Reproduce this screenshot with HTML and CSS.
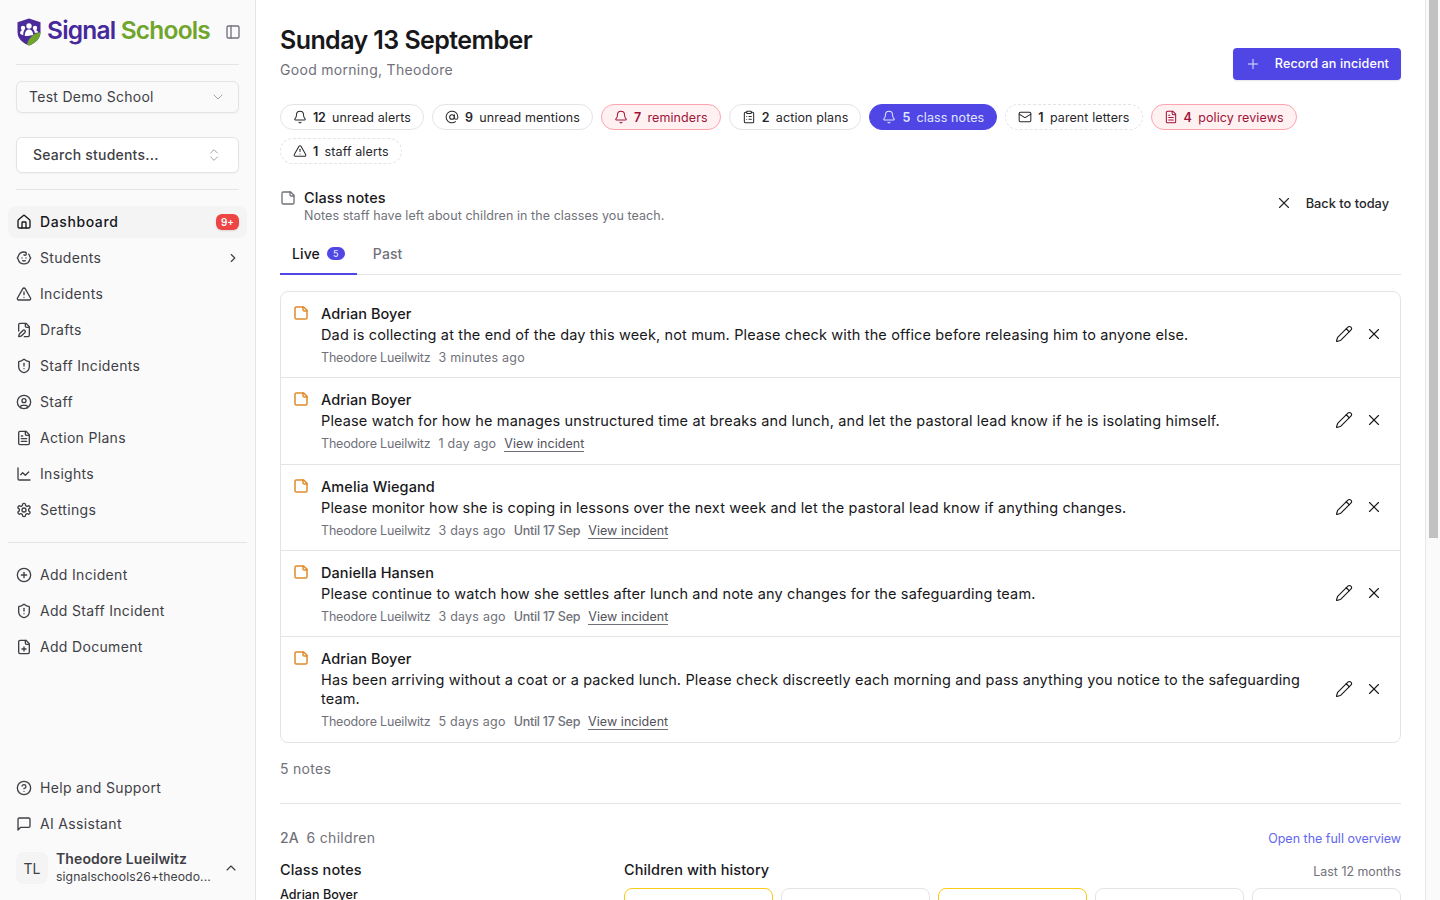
FILE: index.html
```html
<!DOCTYPE html>
<html lang="en">
<head>
<meta charset="utf-8">
<title>Signal Schools</title>
<link rel="stylesheet" href="styles.css">
</head>
<body>
<svg class="defs" width="0" height="0" aria-hidden="true">
  <symbol id="i-house" viewBox="0 0 24 24"><path d="M15 21v-8a1 1 0 0 0-1-1h-4a1 1 0 0 0-1 1v8"/><path d="M3 10a2 2 0 0 1 .709-1.528l7-5.999a2 2 0 0 1 2.582 0l7 5.999A2 2 0 0 1 21 10v9a2 2 0 0 1-2 2H5a2 2 0 0 1-2-2z"/></symbol>
  <symbol id="i-baby" viewBox="0 0 24 24"><path d="M9 12h.01"/><path d="M15 12h.01"/><path d="M10 16c.5.3 1.2.5 2 .5s1.5-.2 2-.5"/><path d="M19 6.3a9 9 0 0 1 1.8 3.9 2 2 0 0 1 0 3.6 9 9 0 0 1-17.6 0 2 2 0 0 1 0-3.6A9 9 0 0 1 12 3c2 0 3.5 1.1 3.5 2.5s-.9 2.5-2 2.5c-.8 0-1.5-.4-1.5-1"/></symbol>
  <symbol id="i-alert" viewBox="0 0 24 24"><path d="m21.73 18-8-14a2 2 0 0 0-3.48 0l-8 14A2 2 0 0 0 4 21h16a2 2 0 0 0 1.73-3"/><path d="M12 9v4"/><path d="M12 17h.01"/></symbol>
  <symbol id="i-filepen" viewBox="0 0 24 24"><path d="M12.5 22H18a2 2 0 0 0 2-2V7l-5-5H6a2 2 0 0 0-2 2v9.5"/><path d="M14 2v4a2 2 0 0 0 2 2h4"/><path d="M13.378 15.626a1 1 0 1 0-3.004-3.004l-5.01 5.012a2 2 0 0 0-.506.854l-.837 2.87a.5.5 0 0 0 .62.62l2.87-.837a2 2 0 0 0 .854-.506z"/></symbol>
  <symbol id="i-shield" viewBox="0 0 24 24"><path d="M20 13c0 5-3.5 7.5-7.66 8.95a1 1 0 0 1-.67-.01C7.5 20.5 4 18 4 13V6a1 1 0 0 1 1-1c2 0 4.5-1.2 6.24-2.72a1.17 1.17 0 0 1 1.52 0C14.51 3.81 17 5 19 5a1 1 0 0 1 1 1z"/><path d="M12 8v4"/><path d="M12 16h.01"/></symbol>
  <symbol id="i-user" viewBox="0 0 24 24"><circle cx="12" cy="12" r="10"/><circle cx="12" cy="10" r="3"/><path d="M7 20.662V19a2 2 0 0 1 2-2h6a2 2 0 0 1 2 2v1.662"/></symbol>
  <symbol id="i-filetext" viewBox="0 0 24 24"><path d="M15 2H6a2 2 0 0 0-2 2v16a2 2 0 0 0 2 2h12a2 2 0 0 0 2-2V7Z"/><path d="M14 2v4a2 2 0 0 0 2 2h4"/><path d="M10 9H8"/><path d="M16 13H8"/><path d="M16 17H8"/></symbol>
  <symbol id="i-chart" viewBox="0 0 24 24"><path d="M3 3v16a2 2 0 0 0 2 2h16"/><path d="m19 9-5 5-4-4-3 3"/></symbol>
  <symbol id="i-settings" viewBox="0 0 24 24"><path d="M12.22 2h-.44a2 2 0 0 0-2 2v.18a2 2 0 0 1-1 1.73l-.43.25a2 2 0 0 1-2 0l-.15-.08a2 2 0 0 0-2.73.73l-.22.38a2 2 0 0 0 .73 2.73l.15.1a2 2 0 0 1 1 1.72v.51a2 2 0 0 1-1 1.74l-.15.09a2 2 0 0 0-.73 2.73l.22.38a2 2 0 0 0 2.73.73l.15-.08a2 2 0 0 1 2 0l.43.25a2 2 0 0 1 1 1.73V20a2 2 0 0 0 2 2h.44a2 2 0 0 0 2-2v-.18a2 2 0 0 1 1-1.73l.43-.25a2 2 0 0 1 2 0l.15.08a2 2 0 0 0 2.73-.73l.22-.39a2 2 0 0 0-.73-2.73l-.15-.08a2 2 0 0 1-1-1.74v-.5a2 2 0 0 1 1-1.74l.15-.09a2 2 0 0 0 .73-2.73l-.22-.38a2 2 0 0 0-2.73-.73l-.15.08a2 2 0 0 1-2 0l-.43-.25a2 2 0 0 1-1-1.73V4a2 2 0 0 0-2-2z"/><circle cx="12" cy="12" r="3"/></symbol>
  <symbol id="i-circleplus" viewBox="0 0 24 24"><circle cx="12" cy="12" r="10"/><path d="M8 12h8"/><path d="M12 8v8"/></symbol>
  <symbol id="i-fileplus" viewBox="0 0 24 24"><path d="M15 2H6a2 2 0 0 0-2 2v16a2 2 0 0 0 2 2h12a2 2 0 0 0 2-2V7Z"/><path d="M14 2v4a2 2 0 0 0 2 2h4"/><path d="M9 15h6"/><path d="M12 18v-6"/></symbol>
  <symbol id="i-help" viewBox="0 0 24 24"><circle cx="12" cy="12" r="10"/><path d="M9.09 9a3 3 0 0 1 5.83 1c0 2-3 3-3 3"/><path d="M12 17h.01"/></symbol>
  <symbol id="i-message" viewBox="0 0 24 24"><path d="M21 15a2 2 0 0 1-2 2H7l-4 4V5a2 2 0 0 1 2-2h14a2 2 0 0 1 2 2z"/></symbol>
  <symbol id="i-sticky" viewBox="0 0 24 24"><path d="M16 3H5a2 2 0 0 0-2 2v14a2 2 0 0 0 2 2h14a2 2 0 0 0 2-2V8Z"/><path d="M15 3v4a2 2 0 0 0 2 2h4"/></symbol>
  <symbol id="i-pencil" viewBox="0 0 24 24"><path d="M21.174 6.812a1 1 0 0 0-3.986-3.987L3.842 16.174a2 2 0 0 0-.5.83l-1.321 4.352a.5.5 0 0 0 .623.622l4.353-1.32a2 2 0 0 0 .83-.497z"/><path d="m15 5 4 4"/></symbol>
  <symbol id="i-x" viewBox="0 0 24 24"><path d="M18 6 6 18"/><path d="m6 6 12 12"/></symbol>
  <symbol id="i-bell" viewBox="0 0 24 24"><path d="M10.268 21a2 2 0 0 0 3.464 0"/><path d="M3.262 15.326A1 1 0 0 0 4 17h16a1 1 0 0 0 .74-1.673C19.41 13.956 18 12.499 18 8A6 6 0 0 0 6 8c0 4.499-1.411 5.956-2.738 7.326"/></symbol>
  <symbol id="i-at" viewBox="0 0 24 24"><circle cx="12" cy="12" r="4"/><path d="M16 8v5a3 3 0 0 0 6 0v-1a10 10 0 1 0-4 8"/></symbol>
  <symbol id="i-clipboard" viewBox="0 0 24 24"><rect x="8" y="2" width="8" height="4" rx="1"/><path d="M16 4h2a2 2 0 0 1 2 2v14a2 2 0 0 1-2 2H6a2 2 0 0 1-2-2V6a2 2 0 0 1 2-2h2"/><path d="M12 11h4"/><path d="M12 16h4"/><path d="M8 11h.01"/><path d="M8 16h.01"/></symbol>
  <symbol id="i-mail" viewBox="0 0 24 24"><path d="m22 7-8.991 5.727a2 2 0 0 1-2.009 0L2 7"/><rect x="2" y="4" width="20" height="16" rx="2"/></symbol>
  <symbol id="i-panel" viewBox="0 0 24 24"><rect x="3" y="3" width="18" height="18" rx="2"/><path d="M9 3v18"/></symbol>
  <symbol id="i-updown" viewBox="0 0 24 24"><path d="m7 15 5 5 5-5"/><path d="m7 9 5-5 5 5"/></symbol>
  <symbol id="i-down" viewBox="0 0 24 24"><path d="m6 9 6 6 6-6"/></symbol>
  <symbol id="i-up" viewBox="0 0 24 24"><path d="m18 15-6-6-6 6"/></symbol>
  <symbol id="i-right" viewBox="0 0 24 24"><path d="m9 18 6-6-6-6"/></symbol>
  <symbol id="i-plus" viewBox="0 0 24 24"><path d="M5 12h14"/><path d="M12 5v14"/></symbol>
</svg>

<div class="app">
  <aside class="sidebar">
    <div class="brand">
      <div class="logo">
        <svg class="shield" viewBox="0 0 24 28" aria-hidden="true">
          <path d="M12 .5 23.5 4.2V14c0 6.6-4.8 11-11.5 13.5C5.3 25 .5 20.6.5 14V4.2z" fill="#4c2a9a"/>
          <path d="M23.5 13.5V14c0 6.6-4.8 11-11.5 13.5-.8-.3-1.300-.5-2-.9 1-6 6-11 13.500-12.600z" fill="#6fa52b"/>
          <circle cx="12" cy="8" r="2.700" fill="#fff"/>
          <circle cx="6" cy="10" r="2.200" fill="#fff"/>
          <circle cx="18" cy="10" r="2.200" fill="#fff"/>
          <path d="M7.800 18c0-4 1.500-6.500 4.200-6.500s4.200 2.500 4.200 5.500c-2.500.5-5 1-8.400 1z" fill="#fff"/>
          <path d="M3 15.500c0-2 1.200-3.600 3-3.600.6 0 1 .1 1.300.3-.8 1.400-1.100 3-1.100 5-1.300-.4-2.500-1-3.200-1.700zM21 14.500c0-1.500-1.200-2.600-3-2.600-.4 0-.8.1-1.200.2.500.8.800 1.800 1 2.800 1.200-.1 2.200-.2 3.200-.4z" fill="#fff"/>
        </svg>
        <span class="logo-text"><span class="logo-signal">Signal</span> <span class="logo-schools">Schools</span></span>
      </div>
      <svg class="ic ic-panel"><use href="#i-panel"/></svg>
    </div>
    <div class="side-pad">
      <hr class="rule">
      <div class="select">
        <span class="lift">Test Demo School</span>
        <svg class="ic ic-chev"><use href="#i-down"/></svg>
      </div>
      <div class="search">
        <span class="lift">Search students...</span>
        <svg class="ic ic-chev"><use href="#i-updown"/></svg>
      </div>
      <hr class="rule rule-search">
    </div>
    <nav class="nav">
      <a class="nav-item active"><svg class="ic"><use href="#i-house"/></svg><span class="nav-label">Dashboard</span><span class="badge">9+</span></a>
      <a class="nav-item"><svg class="ic"><use href="#i-baby"/></svg><span class="nav-label">Students</span><svg class="ic ic-more"><use href="#i-right"/></svg></a>
      <a class="nav-item"><svg class="ic"><use href="#i-alert"/></svg><span class="nav-label">Incidents</span></a>
      <a class="nav-item"><svg class="ic"><use href="#i-filepen"/></svg><span class="nav-label">Drafts</span></a>
      <a class="nav-item"><svg class="ic"><use href="#i-shield"/></svg><span class="nav-label">Staff Incidents</span></a>
      <a class="nav-item"><svg class="ic"><use href="#i-user"/></svg><span class="nav-label">Staff</span></a>
      <a class="nav-item"><svg class="ic"><use href="#i-filetext"/></svg><span class="nav-label">Action Plans</span></a>
      <a class="nav-item"><svg class="ic"><use href="#i-chart"/></svg><span class="nav-label">Insights</span></a>
      <a class="nav-item"><svg class="ic"><use href="#i-settings"/></svg><span class="nav-label">Settings</span></a>
    </nav>
    <hr class="rule rule-nav">
    <nav class="nav">
      <a class="nav-item"><svg class="ic"><use href="#i-circleplus"/></svg><span class="nav-label">Add Incident</span></a>
      <a class="nav-item"><svg class="ic"><use href="#i-shield"/></svg><span class="nav-label">Add Staff Incident</span></a>
      <a class="nav-item"><svg class="ic"><use href="#i-fileplus"/></svg><span class="nav-label">Add Document</span></a>
    </nav>
    <nav class="nav nav-bottom">
      <a class="nav-item"><svg class="ic"><use href="#i-help"/></svg><span class="nav-label">Help and Support</span></a>
      <a class="nav-item"><svg class="ic"><use href="#i-message"/></svg><span class="nav-label">AI Assistant</span></a>
    </nav>
    <div class="account">
      <div class="avatar">TL</div>
      <div class="account-text">
        <div class="account-name">Theodore Lueilwitz</div>
        <div class="account-mail">signalschools26+theodo...</div>
      </div>
      <svg class="ic ic-up"><use href="#i-up"/></svg>
    </div>
  </aside>

  <main class="main">
    <header class="head">
      <div>
        <h1>Sunday 13 September</h1>
        <p class="greeting">Good morning, Theodore</p>
      </div>
      <a class="primary"><svg class="ic"><use href="#i-plus"/></svg><span class="lift">Record an incident</span></a>
    </header>

    <div class="chips">
      <a class="chip"><svg class="ic"><use href="#i-bell"/></svg><b>12</b><span>unread alerts</span></a>
      <a class="chip"><svg class="ic"><use href="#i-at"/></svg><b>9</b><span>unread mentions</span></a>
      <a class="chip chip-pink"><svg class="ic"><use href="#i-bell"/></svg><b>7</b><span>reminders</span></a>
      <a class="chip"><svg class="ic"><use href="#i-clipboard"/></svg><b>2</b><span>action plans</span></a>
      <a class="chip chip-on"><svg class="ic"><use href="#i-bell"/></svg><b>5</b><span>class notes</span></a>
      <a class="chip chip-dash"><svg class="ic"><use href="#i-mail"/></svg><b>1</b><span>parent letters</span></a>
      <a class="chip chip-pink"><svg class="ic"><use href="#i-filetext"/></svg><b>4</b><span>policy reviews</span></a>
      <a class="chip chip-dash"><svg class="ic"><use href="#i-alert"/></svg><b>1</b><span>staff alerts</span></a>
    </div>

    <section class="section-head">
      <svg class="ic ic-section"><use href="#i-sticky"/></svg>
      <div class="section-titles">
        <h2>Class notes</h2>
        <p>Notes staff have left about children in the classes you teach.</p>
      </div>
      <a class="back"><svg class="ic"><use href="#i-x"/></svg><span>Back to today</span></a>
    </section>

    <div class="tabs">
      <a class="tab tab-on">Live <span class="count">5</span></a>
      <a class="tab">Past</a>
    </div>

    <div class="notes">
      <article class="note">
        <svg class="ic ic-note"><use href="#i-sticky"/></svg>
        <div class="note-body">
          <div class="note-name">Adrian Boyer</div>
          <p>Dad is collecting at the end of the day this week, not mum. Please check with the office before releasing him to anyone else.</p>
          <div class="meta"><span>Theodore Lueilwitz</span><span>3 minutes ago</span></div>
        </div>
        <div class="note-actions"><svg class="ic"><use href="#i-pencil"/></svg><svg class="ic"><use href="#i-x"/></svg></div>
      </article>
      <article class="note">
        <svg class="ic ic-note"><use href="#i-sticky"/></svg>
        <div class="note-body">
          <div class="note-name">Adrian Boyer</div>
          <p>Please watch for how he manages unstructured time at breaks and lunch, and let the pastoral lead know if he is isolating himself.</p>
          <div class="meta"><span>Theodore Lueilwitz</span><span>1 day ago</span><a>View incident</a></div>
        </div>
        <div class="note-actions"><svg class="ic"><use href="#i-pencil"/></svg><svg class="ic"><use href="#i-x"/></svg></div>
      </article>
      <article class="note">
        <svg class="ic ic-note"><use href="#i-sticky"/></svg>
        <div class="note-body">
          <div class="note-name">Amelia Wiegand</div>
          <p>Please monitor how she is coping in lessons over the next week and let the pastoral lead know if anything changes.</p>
          <div class="meta"><span>Theodore Lueilwitz</span><span>3 days ago</span><strong>Until 17 Sep</strong><a>View incident</a></div>
        </div>
        <div class="note-actions"><svg class="ic"><use href="#i-pencil"/></svg><svg class="ic"><use href="#i-x"/></svg></div>
      </article>
      <article class="note">
        <svg class="ic ic-note"><use href="#i-sticky"/></svg>
        <div class="note-body">
          <div class="note-name">Daniella Hansen</div>
          <p>Please continue to watch how she settles after lunch and note any changes for the safeguarding team.</p>
          <div class="meta"><span>Theodore Lueilwitz</span><span>3 days ago</span><strong>Until 17 Sep</strong><a>View incident</a></div>
        </div>
        <div class="note-actions"><svg class="ic"><use href="#i-pencil"/></svg><svg class="ic"><use href="#i-x"/></svg></div>
      </article>
      <article class="note">
        <svg class="ic ic-note"><use href="#i-sticky"/></svg>
        <div class="note-body">
          <div class="note-name">Adrian Boyer</div>
          <p>Has been arriving without a coat or a packed lunch. Please check discreetly each morning and pass anything you notice to the safeguarding team.</p>
          <div class="meta"><span>Theodore Lueilwitz</span><span>5 days ago</span><strong>Until 17 Sep</strong><a>View incident</a></div>
        </div>
        <div class="note-actions"><svg class="ic"><use href="#i-pencil"/></svg><svg class="ic"><use href="#i-x"/></svg></div>
      </article>
    </div>

    <p class="notes-count">5 notes</p>
    <hr class="rule rule-main">

    <div class="class-head">
      <div class="class-title"><b>2A</b><span>6 children</span></div>
      <a class="overview">Open the full overview</a>
    </div>

    <div class="class-grid">
      <div>
        <h3>Class notes</h3>
        <div class="class-child">Adrian Boyer</div>
      </div>
      <div>
        <div class="history-head"><h3>Children with history</h3><span>Last 12 months</span></div>
        <div class="history">
          <div class="h-card h-card-warn"></div>
          <div class="h-card"></div>
          <div class="h-card h-card-warn"></div>
          <div class="h-card"></div>
          <div class="h-card"></div>
        </div>
      </div>
    </div>
  </main>

  <div class="scrollbar"><div class="thumb"></div></div>
</div>
</body>
</html>
```
FILE: styles.css
```css
* { box-sizing: border-box; }
html, body { margin: 0; height: 100%; overflow: hidden; }
body {
  font-family: Inter, "Noto Sans", sans-serif;
  font-size: 14px;
  color: #18181b;
  background: #fff;
}
.defs { position: absolute; }
h1, h2, h3, p { margin: 0; }
hr { border: 0; margin: 0; }
.ic {
  width: 16px;
  height: 16px;
  flex: none;
  fill: none;
  stroke: currentColor;
  stroke-width: 2;
  stroke-linecap: round;
  stroke-linejoin: round;
}
.app { display: flex; height: 900px; overflow: hidden; }

/* Sidebar */
.sidebar {
  width: 256px;
  flex: none;
  height: 900px;
  display: flex;
  flex-direction: column;
  padding: 0 8px;
  background: #fafafa;
  border-right: 1px solid #e5e5e5;
  color: #3f3f46;
}
.brand {
  height: 64px;
  display: flex;
  align-items: center;
  justify-content: space-between;
  padding: 0 6px 1px 9px;
}
.logo { display: flex; align-items: center; gap: 6px; }
.shield { width: 24px; height: 28px; flex: none; }
.logo-text { font-size: 24.5px; font-weight: 600; letter-spacing: -.8px; white-space: nowrap; padding-bottom: 3px; }
.logo-signal { color: #46299b; }
.logo-schools { color: #6fa52b; }
.ic-panel { color: #71717a; }
.side-pad { padding: 0 8px; }
.rule { height: 1px; background: #e4e4e7; }
.select, .search {
  display: flex;
  align-items: center;
  justify-content: space-between;
  border: 1px solid #e4e4e7;
  border-radius: 6px;
  letter-spacing: .28px;
  box-shadow: 0 1px 2px rgba(0, 0, 0, .04);
}
.lift { padding-bottom: 2px; }
.select { height: 32px; margin-top: 16px; padding: 0 12px; background: #fafafa; color: #3f3f46; }
.search { height: 36px; margin-top: 24px; padding: 0 16px 0 16px; background: #fff; font-weight: 500; color: #3f3f46; letter-spacing: .22px; }
.ic-chev { color: #a1a1aa; stroke-width: 1.5; }
.rule-search { margin-top: 16px; }
.nav { display: flex; flex-direction: column; gap: 4px; margin-top: 16px; }
.nav-item {
  height: 32px;
  display: flex;
  align-items: center;
  gap: 8px;
  padding: 0 8px;
  border-radius: 8px;
  letter-spacing: .32px;
  white-space: nowrap;
}
.nav-label { flex: 1; padding-bottom: 2px; }
.nav-item.active { background: #f4f4f5; color: #18181b; font-weight: 500; letter-spacing: .6px; }
.badge {
  height: 16px;
  width: 23px;
  text-align: center;
  border-radius: 6px;
  background: #ef4444;
  color: #fff;
  font-size: 10px;
  font-weight: 600;
  line-height: 16px;
  letter-spacing: 0;
  box-shadow: 0 1px 2px rgba(0, 0, 0, .12);
}
.ic-more { width: 14px; height: 14px; margin-right: -1px; }
.rule-nav { margin-top: 16px; }
.nav-bottom { margin-top: auto; }
.account {
  display: flex;
  align-items: center;
  gap: 8px;
  height: 32px;
  margin: 12px 0 16px;
  padding: 0 8px;
}
.avatar {
  width: 32px;
  height: 32px;
  flex: none;
  display: grid;
  place-items: center;
  border-radius: 8px;
  background: #f4f4f5;
  font-size: 14px;
}
.account-text { flex: 1; min-width: 0; line-height: 18px; }
.account-name { font-weight: 600; letter-spacing: .1px; white-space: nowrap; }
.account-mail { font-size: 12.2px; letter-spacing: .1px; white-space: nowrap; }
.ic-up { stroke-width: 1.75; }

/* Main */
.main { flex: 1; min-width: 0; padding: 24px 24px 0; overflow: hidden; }
.head { display: flex; align-items: flex-end; justify-content: space-between; }
h1 { font-size: 25px; font-weight: 600; line-height: 32px; letter-spacing: -.58px; color: #18181b; }
.greeting { margin-top: 3px; line-height: 21px; color: #71717a; font-size: 14px; letter-spacing: .3px; }
.primary {
  display: flex;
  align-items: center;
  gap: 14px;
  height: 32px;
  padding: 0 12px;
  border-radius: 4px;
  background: #4f46e5;
  color: #fff;
  font-size: 12.6px;
  font-weight: 500;
  letter-spacing: .1px;
  box-shadow: 0 1px 2px rgba(0, 0, 0, .1);
}
.primary .ic { stroke-width: 1.5; opacity: .85; }
.chips { display: flex; flex-wrap: wrap; gap: 8px; margin-top: 24px; width: 1060px; }
.chip {
  height: 26px;
  display: flex;
  align-items: center;
  gap: 6px;
  padding: 0 12px;
  border: 1px solid #e4e4e7;
  border-radius: 13px;
  background: #fff;
  font-size: 12.5px;
  letter-spacing: .1px;
  white-space: nowrap;
  color: #27272a;
}
.chip b { font-weight: 600; letter-spacing: -.3px; margin-right: .6px; }
.chip .ic { width: 14px; height: 14px; stroke-width: 1.75; }
.chip-pink { background: #fff1f2; border-color: #fda4af; color: #9f1239; }
.chip-on { background: #4f46e5; border-color: #4f46e5; color: #e0e7ff; }
.chip-dash { border-style: dashed; }

.section-head { display: flex; align-items: flex-start; gap: 8px; margin-top: 25px; }
.ic-section { color: #71717a; margin-top: 1px; }
.section-titles { flex: 1; }
h2 { font-size: 14.5px; font-weight: 500; line-height: 18px; letter-spacing: .1px; color: #18181b; }
.section-titles p { font-size: 12.5px; line-height: 17px; color: #71717a; letter-spacing: .07px; }
.back { display: flex; align-items: center; gap: 13px; padding: 5px 12px 0 0; font-size: 12.8px; font-weight: 500; color: #27272a; }
.back .ic { width: 18px; height: 18px; stroke-width: 1.5; }

.tabs { display: flex; align-items: stretch; margin-top: 14px; height: 37px; border-bottom: 1px solid #e4e4e7; }
.tab { display: flex; align-items: center; gap: 7px; height: 37px; padding: 0 12px 7px; font-size: 14px; font-weight: 500; letter-spacing: .1px; color: #71717a; margin-right: 4px; }
.tab-on { color: #18181b; border-bottom: 2px solid #4f46e5; padding-bottom: 5px; }
.count {
  width: 18px;
  height: 13px;
  display: grid;
  place-items: center;
  border-radius: 7px;
  background: #4f46e5;
  color: #e0e7ff;
  font-size: 9px;
  font-weight: 500;
  letter-spacing: 0;
}

.notes { margin-top: 16px; border: 1px solid #e4e4e7; border-radius: 8px; }
.note { display: flex; align-items: stretch; padding: 12px 12px 10.3px; border-bottom: 1px solid #e4e4e7; }
.note:last-child { border-bottom: 0; padding-bottom: 11.3px; }
.ic-note { color: #e08b2a; stroke-width: 2.25; margin-top: 1px; }
.note-body { flex: 1; min-width: 0; margin-left: 12px; }
.note-name { font-size: 14.5px; font-weight: 500; line-height: 20px; color: #18181b; letter-spacing: .08px; }
.note-body p { margin-top: 1px; font-size: 14.5px; line-height: 19px; color: #18181b; letter-spacing: .14px; }
.meta { display: flex; gap: 8px; margin-top: 5px; height: 18px; font-size: 12.5px; line-height: 18px; color: #71717a; letter-spacing: .22px; white-space: nowrap; }
.meta span:first-child { letter-spacing: -.18px; }
.meta strong { font-weight: 500; letter-spacing: -.25px; }
.meta a { color: #52525b; border-bottom: 1px solid #71717a; height: 17px; line-height: 17px; letter-spacing: .05px; }
.note-actions { display: flex; align-items: center; justify-content: flex-end; gap: 12px; width: 78px; flex: none; padding: 0 5px 3px 0; color: #18181b; }
.note-actions .ic { width: 18px; height: 18px; stroke-width: 1.5; }

.notes-count { margin-top: 16px; line-height: 20px; color: #71717a; font-size: 14px; letter-spacing: .3px; }
.rule-main { margin-top: 24px; }
.class-head { display: flex; align-items: center; justify-content: space-between; margin-top: 23px; height: 20px; }
.class-title { display: flex; gap: 8px; color: #71717a; font-size: 14px; letter-spacing: .3px; }
.class-title b { font-weight: 500; letter-spacing: 0; }
.overview { font-size: 12.5px; color: #6366f1; letter-spacing: 0; padding-top: 2px; }
.class-grid { display: grid; grid-template-columns: 320px 1fr; gap: 24px; margin-top: 13px; }
h3 { font-size: 14.5px; font-weight: 500; line-height: 20px; letter-spacing: .1px; color: #18181b; }
.class-child { margin-top: 6px; font-size: 12.6px; font-weight: 500; line-height: 18px; }
.history-head { display: flex; align-items: center; justify-content: space-between; }
.history-head span { font-size: 12.4px; color: #71717a; letter-spacing: 0; padding-top: 2px; }
.history { display: grid; grid-template-columns: repeat(5, 1fr); gap: 8px; margin-top: 8px; }
.h-card { height: 60px; border: 1px solid #e4e4e7; border-radius: 8px; }
.h-card-warn { border-color: #facc15; }

/* Scrollbar drawn to match the window's own */
.scrollbar { width: 15px; flex: none; background: #fafafa; border-left: 1px solid #e8e8e8; padding: 0 2px 0 3px; }
.thumb { height: 538px; background: #c1c1c1; }
```
